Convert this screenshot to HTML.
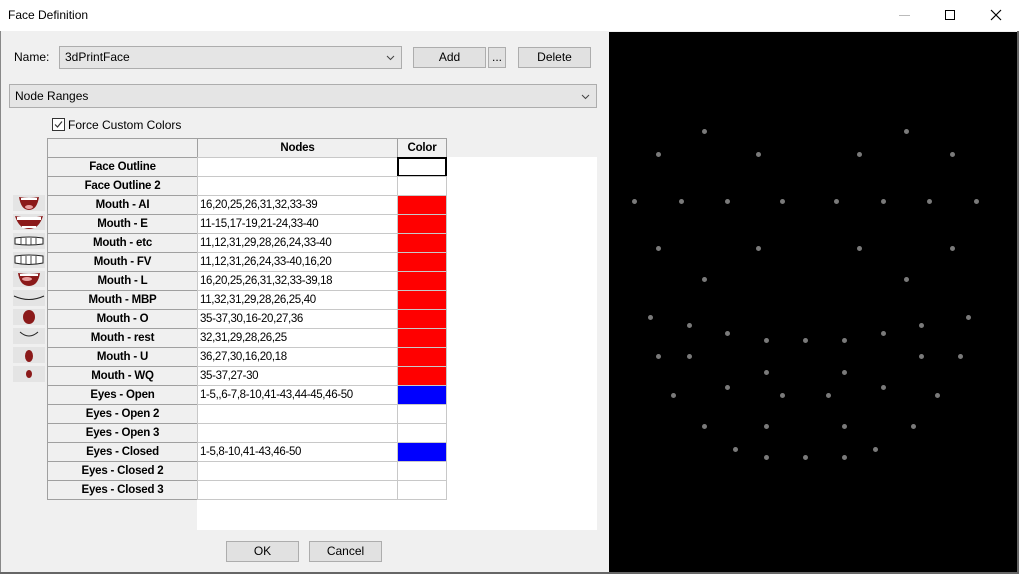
<!DOCTYPE html>
<html><head><meta charset="utf-8"><style>
*{margin:0;padding:0;box-sizing:border-box}
body{width:1019px;height:574px;background:#f0f0f0;font-family:"Liberation Sans",sans-serif;font-size:12px;color:#000;position:relative;overflow:hidden}
.a{position:absolute}
.btn{position:absolute;background:#e1e1e1;border:1px solid #adadad;text-align:center;line-height:19px;font-size:12px}
.combo{position:absolute;background:#e5e5e5;border:1px solid #adadad;line-height:20px;padding-left:5px}
.rh{position:absolute;left:47px;width:151px;height:20px;border:1px solid #a0a0a0;background:#f0f0f0;font-weight:bold;text-align:center;line-height:18px;font-size:11.5px;letter-spacing:-0.2px}
.nc{position:absolute;left:197px;width:201px;height:20px;border:1px solid #c8c8c8;background:#fff;line-height:18px;padding-left:2px;font-size:11.5px;letter-spacing:-0.35px}
.cc{position:absolute;left:397px;width:50px;height:20px;border:1px solid #c8c8c8;background:#fff}
.d{position:absolute;width:5px;height:5px;border-radius:3px;background:#7a7a7a}
.ic{position:absolute;left:13px;width:32px;height:16px;background:#e4e4e4}
</style></head><body>
<div class="a" style="left:0;top:0;width:1019px;height:31px;background:#fff"></div>
<div class="a" style="left:8px;top:8px;font-size:12px">Face Definition</div>
<div class="a" style="left:899px;top:15px;width:11px;height:1px;background:#bbb"></div>
<div class="a" style="left:945px;top:10px;width:10px;height:10px;border:1px solid #000"></div>
<svg class="a" style="left:990px;top:9px" width="12" height="12"><path d="M1 1L11 11M11 1L1 11" stroke="#000" stroke-width="1.2"/></svg>
<div class="a" style="left:0;top:31px;width:1px;height:543px;background:#888"></div>
<div class="a" style="left:1017px;top:31px;width:2px;height:543px;background:#666"></div>
<div class="a" style="left:0;top:572px;width:1019px;height:2px;background:#666"></div>

<div class="a" style="left:14px;top:50px">Name:</div>
<div class="combo" style="left:59px;top:46px;width:343px;height:23px">3dPrintFace<svg class="a" style="right:6px;top:8px" width="9" height="6"><path d="M1 1L4.5 4.5L8 1" stroke="#444" fill="none"/></svg></div>
<div class="btn" style="left:413px;top:47px;width:73px;height:21px">Add</div>
<div class="btn" style="left:488px;top:47px;width:18px;height:21px">...</div>
<div class="btn" style="left:518px;top:47px;width:73px;height:21px">Delete</div>
<div class="combo" style="left:9px;top:84px;width:588px;height:24px;line-height:22px">Node Ranges<svg class="a" style="right:6px;top:9px" width="9" height="6"><path d="M1 1L4.5 4.5L8 1" stroke="#444" fill="none"/></svg></div>
<div class="a" style="left:52px;top:118px;width:13px;height:13px;border:1px solid #333;background:#fff"></div>
<svg class="a" style="left:53px;top:119px" width="11" height="11"><path d="M2 5.5L4.5 8L9 2.5" stroke="#333" stroke-width="1.2" fill="none"/></svg>
<div class="a" style="left:68px;top:118px">Force Custom Colors</div>

<div class="a" style="left:197px;top:157px;width:400px;height:373px;background:#fff"></div>
<div class="rh" style="top:138px"></div>
<div class="rh" style="left:197px;width:201px;top:138px">Nodes</div>
<div class="rh" style="left:397px;width:50px;top:138px">Color</div>

<div class="rh" style="top:157px">Face Outline</div><div class="nc" style="top:157px"></div><div class="cc" style="top:157px;border:2px solid #000"></div>
<div class="rh" style="top:176px">Face Outline 2</div><div class="nc" style="top:176px"></div><div class="cc" style="top:176px"></div>
<div class="rh" style="top:195px">Mouth - AI</div><div class="nc" style="top:195px">16,20,25,26,31,32,33-39</div><div class="cc" style="top:195px;background:#f00"></div>
<div class="rh" style="top:214px">Mouth - E</div><div class="nc" style="top:214px">11-15,17-19,21-24,33-40</div><div class="cc" style="top:214px;background:#f00"></div>
<div class="rh" style="top:233px">Mouth - etc</div><div class="nc" style="top:233px">11,12,31,29,28,26,24,33-40</div><div class="cc" style="top:233px;background:#f00"></div>
<div class="rh" style="top:252px">Mouth - FV</div><div class="nc" style="top:252px">11,12,31,26,24,33-40,16,20</div><div class="cc" style="top:252px;background:#f00"></div>
<div class="rh" style="top:271px">Mouth - L</div><div class="nc" style="top:271px">16,20,25,26,31,32,33-39,18</div><div class="cc" style="top:271px;background:#f00"></div>
<div class="rh" style="top:290px">Mouth - MBP</div><div class="nc" style="top:290px">11,32,31,29,28,26,25,40</div><div class="cc" style="top:290px;background:#f00"></div>
<div class="rh" style="top:309px">Mouth - O</div><div class="nc" style="top:309px">35-37,30,16-20,27,36</div><div class="cc" style="top:309px;background:#f00"></div>
<div class="rh" style="top:328px">Mouth - rest</div><div class="nc" style="top:328px">32,31,29,28,26,25</div><div class="cc" style="top:328px;background:#f00"></div>
<div class="rh" style="top:347px">Mouth - U</div><div class="nc" style="top:347px">36,27,30,16,20,18</div><div class="cc" style="top:347px;background:#f00"></div>
<div class="rh" style="top:366px">Mouth - WQ</div><div class="nc" style="top:366px">35-37,27-30</div><div class="cc" style="top:366px;background:#f00"></div>
<div class="rh" style="top:385px">Eyes - Open</div><div class="nc" style="top:385px">1-5,,6-7,8-10,41-43,44-45,46-50</div><div class="cc" style="top:385px;background:#00f"></div>
<div class="rh" style="top:404px">Eyes - Open 2</div><div class="nc" style="top:404px"></div><div class="cc" style="top:404px"></div>
<div class="rh" style="top:423px">Eyes - Open 3</div><div class="nc" style="top:423px"></div><div class="cc" style="top:423px"></div>
<div class="rh" style="top:442px">Eyes - Closed</div><div class="nc" style="top:442px">1-5,8-10,41-43,46-50</div><div class="cc" style="top:442px;background:#00f"></div>
<div class="rh" style="top:461px">Eyes - Closed 2</div><div class="nc" style="top:461px"></div><div class="cc" style="top:461px"></div>
<div class="rh" style="top:480px">Eyes - Closed 3</div><div class="nc" style="top:480px"></div><div class="cc" style="top:480px"></div>

<svg class="ic" style="top:195px" viewBox="0 0 32 16"><path d="M6 2Q16 4 26 2Q24 15 16 15Q8 15 6 2Z" fill="#8b1a1a"/><path d="M8 3H24V5H8Z" fill="#fff"/><ellipse cx="16" cy="12" rx="4" ry="2" fill="#e8a0a0"/></svg>
<svg class="ic" style="top:214px" viewBox="0 0 32 16"><path d="M2 2Q16 5 30 2Q26 15 16 15Q6 15 2 2Z" fill="#8b1a1a"/><path d="M4 3H28V6H4ZM9 12H23V14H9Z" fill="#fff"/></svg>
<svg class="ic" style="top:233px" viewBox="0 0 32 16"><path d="M2 5Q16 3 30 5V11Q16 13 2 11Z" fill="#fff" stroke="#222" stroke-width="1"/><path d="M8 5V11M13 5V12M18 5V12M23 5V11" stroke="#222" stroke-width=".8"/></svg>
<svg class="ic" style="top:252px" viewBox="0 0 32 16"><path d="M2 4Q16 2 30 4V11Q16 14 2 11Z" fill="#fff" stroke="#222" stroke-width="1"/><path d="M8 4V12M13 4V12M18 4V12M23 4V12" stroke="#222" stroke-width=".8"/></svg>
<svg class="ic" style="top:271px" viewBox="0 0 32 16"><path d="M5 2Q16 4 27 2Q25 15 16 15Q7 15 5 2Z" fill="#8b1a1a"/><path d="M7 3H25V5H7Z" fill="#fff"/><ellipse cx="14" cy="8" rx="5" ry="2" fill="#e8a0a0"/></svg>
<svg class="ic" style="top:290px" viewBox="0 0 32 16"><path d="M1 6Q16 13 31 6" stroke="#222" fill="none"/></svg>
<svg class="ic" style="top:309px" viewBox="0 0 32 16"><ellipse cx="16" cy="8" rx="6" ry="7" fill="#8b1a1a"/></svg>
<svg class="ic" style="top:328px" viewBox="0 0 32 16"><path d="M7 4Q16 12 25 4" stroke="#222" fill="none"/></svg>
<svg class="ic" style="top:347px" viewBox="0 0 32 16"><ellipse cx="16" cy="9" rx="4" ry="6" fill="#8b1a1a"/></svg>
<svg class="ic" style="top:366px" viewBox="0 0 32 16"><ellipse cx="16" cy="8" rx="3" ry="4" fill="#8b1a1a"/></svg>

<div class="btn" style="left:226px;top:541px;width:73px;height:21px">OK</div>
<div class="btn" style="left:309px;top:541px;width:73px;height:21px">Cancel</div>

<div class="a" style="left:609px;top:32px;width:408px;height:540px;background:#000"></div>
<div class="d" style="left:702px;top:129px"></div><div class="d" style="left:904px;top:129px"></div>
<div class="d" style="left:656px;top:152px"></div><div class="d" style="left:756px;top:152px"></div><div class="d" style="left:857px;top:152px"></div><div class="d" style="left:950px;top:152px"></div>
<div class="d" style="left:632px;top:199px"></div><div class="d" style="left:679px;top:199px"></div><div class="d" style="left:725px;top:199px"></div><div class="d" style="left:780px;top:199px"></div><div class="d" style="left:834px;top:199px"></div><div class="d" style="left:881px;top:199px"></div><div class="d" style="left:927px;top:199px"></div><div class="d" style="left:974px;top:199px"></div>
<div class="d" style="left:656px;top:246px"></div><div class="d" style="left:756px;top:246px"></div><div class="d" style="left:857px;top:246px"></div><div class="d" style="left:950px;top:246px"></div>
<div class="d" style="left:702px;top:277px"></div><div class="d" style="left:904px;top:277px"></div>
<div class="d" style="left:648px;top:315px"></div><div class="d" style="left:966px;top:315px"></div>
<div class="d" style="left:687px;top:323px"></div><div class="d" style="left:919px;top:323px"></div>
<div class="d" style="left:725px;top:331px"></div><div class="d" style="left:881px;top:331px"></div>
<div class="d" style="left:764px;top:338px"></div><div class="d" style="left:803px;top:338px"></div><div class="d" style="left:842px;top:338px"></div>
<div class="d" style="left:656px;top:354px"></div><div class="d" style="left:687px;top:354px"></div><div class="d" style="left:919px;top:354px"></div><div class="d" style="left:958px;top:354px"></div>
<div class="d" style="left:764px;top:370px"></div><div class="d" style="left:842px;top:370px"></div>
<div class="d" style="left:725px;top:385px"></div><div class="d" style="left:881px;top:385px"></div>
<div class="d" style="left:671px;top:393px"></div><div class="d" style="left:780px;top:393px"></div><div class="d" style="left:826px;top:393px"></div><div class="d" style="left:935px;top:393px"></div>
<div class="d" style="left:702px;top:424px"></div><div class="d" style="left:764px;top:424px"></div><div class="d" style="left:842px;top:424px"></div><div class="d" style="left:911px;top:424px"></div>
<div class="d" style="left:733px;top:447px"></div><div class="d" style="left:873px;top:447px"></div>
<div class="d" style="left:764px;top:455px"></div><div class="d" style="left:803px;top:455px"></div><div class="d" style="left:842px;top:455px"></div>
</body></html>
